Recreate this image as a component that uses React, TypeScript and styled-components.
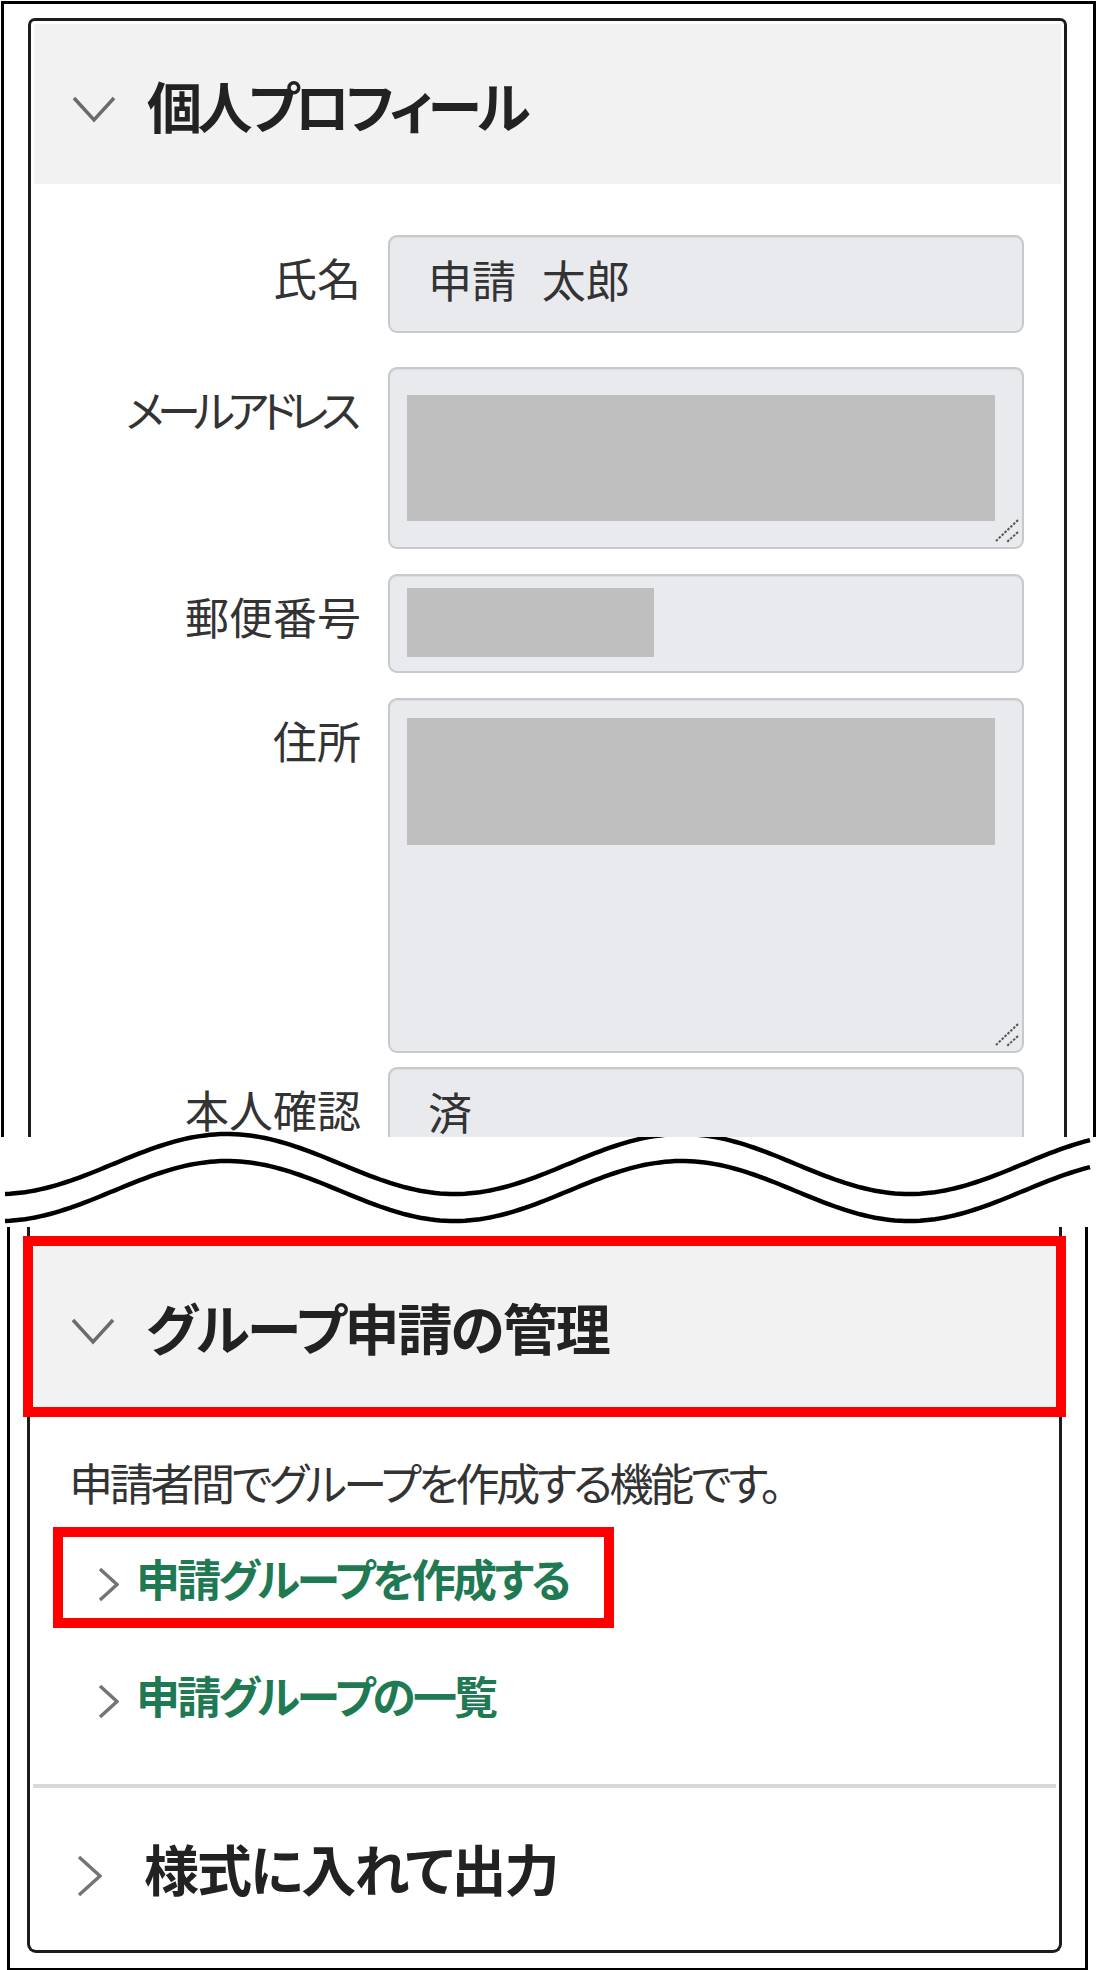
import React from "react";
import styled, { createGlobalStyle, css } from "styled-components";

const GlobalStyle = createGlobalStyle`
  html, body {
    margin: 0;
    padding: 0;
    background: #fff;
  }
  body {
    font-family: "Noto Sans CJK JP", "Noto Sans", sans-serif;
    font-feature-settings: "palt";
    color: #333;
  }
`;

const Page = styled.div`
  width: 1096px;
  height: 1970px;
  overflow: hidden;
`;

/* screenshot frames */
const TopFrame = styled.div`
  box-sizing: border-box;
  width: 1095px;
  height: 1136px;
  margin: 1px 0 0 1px;
  border: 3px solid #000;
  border-bottom: none;
  padding: 14px 26px 0 24px;
  overflow: hidden;
`;

const BottomFrame = styled.div`
  box-sizing: border-box;
  margin: 0 8px 0 7px;
  border: 3px solid #000;
  border-top: none;
  border-bottom-width: 4px;
  padding: 0 23px 15px 17px;
`;

const BreakMark = styled.svg`
  display: block;
  margin-top: -6px;
`;

const Card = styled.div<{ $cut: "top" | "bottom" }>`
  box-sizing: border-box;
  border: 3px solid #1c1c1c;
  border-radius: 7px;
  padding: 3px;
  background: #fff;
  ${(p) =>
    p.$cut === "bottom"
      ? css`
          border-bottom: none;
          border-bottom-left-radius: 0;
          border-bottom-right-radius: 0;
        `
      : css`
          border-top: none;
          border-top-left-radius: 0;
          border-top-right-radius: 0;
          border-bottom-left-radius: 9px;
          border-bottom-right-radius: 9px;
          padding-top: 19px;
        `}
`;

const SectionHeader = styled.div<{ $open?: boolean; $marked?: boolean; $h: number }>`
  display: flex;
  align-items: center;
  box-sizing: border-box;
  height: ${(p) => p.$h}px;
  padding-left: ${(p) => (p.$open ? 38 : 44)}px;
  gap: ${(p) => (p.$open ? 31 : 42)}px;
  background: ${(p) => (p.$open ? "#f2f2f2" : "#fff")};
  outline: ${(p) => (p.$marked ? "10px solid #ff0000" : "none")};
`;

const HeaderTitle = styled.h2<{ $tracking?: number }>`
  margin: 0;
  font-size: 55px;
  font-weight: 700;
  line-height: 1;
  letter-spacing: ${(p) => p.$tracking ?? -2}px;
  color: #222;
  white-space: nowrap;
`;

const Chevron = styled.svg<{ $shift?: number }>`
  display: block;
  flex: none;
  margin-top: ${(p) => p.$shift ?? 0}px;
`;

/* profile form */
const Form = styled.div`
  display: flex;
  flex-direction: column;
  padding: 51px 37px 0 0;
`;

const Row = styled.div<{ $gap?: number }>`
  display: grid;
  grid-template-columns: 327px 1fr;
  column-gap: 27px;
  margin-top: ${(p) => p.$gap ?? 0}px;
`;

const Label = styled.div<{ $tracking?: number }>`
  text-align: right;
  font-size: 44px;
  line-height: 40px;
  padding-top: 22px;
  padding-right: ${(p) => -(p.$tracking ?? 0)}px;
  letter-spacing: ${(p) => p.$tracking ?? 0}px;
  color: #333;
  white-space: nowrap;
`;

const Field = styled.div<{ $h: number }>`
  position: relative;
  box-sizing: border-box;
  height: ${(p) => p.$h}px;
  border: 2px solid #c7c9cc;
  border-radius: 9px;
  background: #e9eaed;
  box-shadow: inset 0 1px 1px rgba(0, 0, 0, 0.06);
  padding-left: 17px;
`;

const FieldValue = styled.div`
  padding: 22px 0 0 21px;
  font-size: 44px;
  line-height: 40px;
  color: #333;
  word-spacing: 16px;
  white-space: nowrap;
`;

const Redacted = styled.div<{ $w: number; $h: number; $top: number }>`
  width: ${(p) => p.$w}px;
  height: ${(p) => p.$h}px;
  margin-top: ${(p) => p.$top}px;
  background: #bfbfbf;
`;

const Grip = styled.svg`
  position: absolute;
  right: 2px;
  bottom: 3px;
`;

/* group section body */
const Body = styled.div`
  padding: 49px 0 49px 30px;
`;

const Description = styled.p`
  margin: 0 0 29px 6px;
  font-size: 44px;
  line-height: 52px;
  letter-spacing: -3.3px;
  color: #333;
  white-space: nowrap;
`;

const LinkItem = styled.a<{ $marked?: boolean }>`
  display: flex;
  align-items: center;
  box-sizing: border-box;
  width: 541px;
  height: 81px;
  padding-left: 35px;
  gap: 17px;
  font-size: 44px;
  line-height: 52px;
  font-weight: 700;
  letter-spacing: -2.8px;
  color: #1f7a53;
  text-decoration: none;
  white-space: nowrap;
  outline: ${(p) => (p.$marked ? "10px solid #ff0000" : "none")};

  & + & {
    margin-top: 36px;
  }
`;

const Divider = styled.hr`
  margin: 0;
  height: 4px;
  border: none;
  background: #d9d9d9;
`;

const ChevronDown = () => (
  <Chevron width="44" height="27" viewBox="0 0 44 27" $shift={10}>
    <polyline points="2,2 22,24 42,2" fill="none" stroke="#6b6b6b" strokeWidth="3.5" />
  </Chevron>
);

const ChevronRight = ({ w, h, shift }: { w: number; h: number; shift: number }) => (
  <Chevron width={w} height={h} viewBox={`0 0 ${w} ${h}`} $shift={shift}>
    <polyline
      points={`2,2 ${w - 2},${h / 2} 2,${h - 2}`}
      fill="none"
      stroke="#747474"
      strokeWidth="3.5"
    />
  </Chevron>
);

const ResizeGrip = () => (
  <Grip width="27" height="27" viewBox="0 0 27 27">
    <g stroke="#555" strokeWidth="2" strokeDasharray="2.5 1.5">
      <line x1="25" y1="3" x2="2" y2="25" />
      <line x1="25" y1="15" x2="14" y2="25" />
    </g>
  </Grip>
);

const wavePath = (mid: number) => {
  const pts: string[] = [];
  for (let x = 5; x <= 1090; x += 5) {
    const y = mid - 30 * Math.cos((2 * Math.PI * (x - 227)) / 455);
    pts.push(`${x},${y.toFixed(1)}`);
  }
  return "M" + pts.join(" L");
};

export default function App() {
  return (
    <Page>
      <GlobalStyle />
      <TopFrame>
        <Card $cut="bottom">
          <SectionHeader $open $h={160}>
            <ChevronDown />
            <HeaderTitle $tracking={-4.5}>個人プロフィール</HeaderTitle>
          </SectionHeader>
          <Form>
            <Row>
              <Label>氏名</Label>
              <Field $h={98}>
                <FieldValue>申請 太郎</FieldValue>
              </Field>
            </Row>
            <Row $gap={34}>
              <Label $tracking={-7}>メールアドレス</Label>
              <Field $h={182}>
                <Redacted $w={588} $h={126} $top={26} />
                <ResizeGrip />
              </Field>
            </Row>
            <Row $gap={25}>
              <Label>郵便番号</Label>
              <Field $h={99}>
                <Redacted $w={247} $h={69} $top={12} />
              </Field>
            </Row>
            <Row $gap={25}>
              <Label>住所</Label>
              <Field $h={355}>
                <Redacted $w={588} $h={127} $top={18} />
                <ResizeGrip />
              </Field>
            </Row>
            <Row $gap={14}>
              <Label>本人確認</Label>
              <Field $h={98}>
                <FieldValue>済</FieldValue>
              </Field>
            </Row>
          </Form>
        </Card>
      </TopFrame>

      <BreakMark width="1096" height="96" viewBox="0 0 1096 96">
        <path d={wavePath(33)} fill="none" stroke="#000" strokeWidth="4.5" />
        <path d={wavePath(60)} fill="none" stroke="#000" strokeWidth="4.5" />
      </BreakMark>

      <BottomFrame>
        <Card $cut="top">
          <SectionHeader $open $marked $h={161}>
            <ChevronDown />
            <HeaderTitle>グループ申請の管理</HeaderTitle>
          </SectionHeader>
          <Body>
            <Description>申請者間でグループを作成する機能です。</Description>
            <LinkItem $marked>
              <ChevronRight w={21} h={35} shift={14} />
              申請グループを作成する
            </LinkItem>
            <LinkItem>
              <ChevronRight w={21} h={35} shift={14} />
              申請グループの一覧
            </LinkItem>
          </Body>
          <Divider />
          <SectionHeader $h={159}>
            <ChevronRight w={25} h={42} shift={16} />
            <HeaderTitle>様式に入れて出力</HeaderTitle>
          </SectionHeader>
        </Card>
      </BottomFrame>
    </Page>
  );
}
